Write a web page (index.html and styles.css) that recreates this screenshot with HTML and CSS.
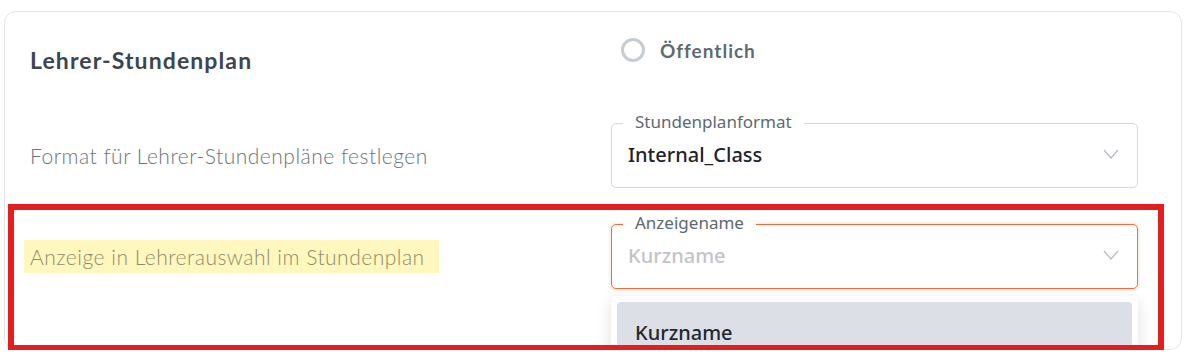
FILE: index.html
```html
<!DOCTYPE html>
<html lang="de">
<head>
    <meta charset="UTF-8">
    <meta name="viewport" content="width=device-width, initial-scale=1.0">
    <title>Lehrer-Stundenplan</title>
    <link rel="stylesheet" href="styles.css">
</head>
<body>
    <div class="page">
        <div class="card">
            <div class="row row-head">
                <h2 class="title">Lehrer-Stundenplan</h2>
                <label class="radio">
                    <span class="radio-dot"></span>
                    <span class="radio-text">Öffentlich</span>
                </label>
            </div>

            <div class="row row-format">
                <p class="desc">Format für Lehrer-Stundenpläne festlegen</p>
                <div class="select">
                    <span class="select-label">Stundenplanformat</span>
                    <span class="select-value">Internal_Class</span>
                    <svg class="chevron" width="16" height="10" viewBox="0 0 16 10">
                        <polyline points="1,1 8,9 15,1" fill="none" stroke="#b4bac1" stroke-width="1.2"/>
                    </svg>
                </div>
            </div>

            <!-- markierter bereich -->
            <div class="row row-display marked">
                <p class="desc"><span class="hl">Anzeige in Lehrerauswahl im Stundenplan</span></p>
                <div class="select select-open">
                    <span class="select-label">Anzeigename</span>
                    <span class="select-value placeholder">Kurzname</span>
                    <svg class="chevron" width="16" height="10" viewBox="0 0 16 10">
                        <polyline points="1,1 8,9 15,1" fill="none" stroke="#b4bac1" stroke-width="1.2"/>
                    </svg>
                    <ul class="dropdown">
                        <li class="option active">Kurzname</li>
                    </ul>
                </div>
            </div>
        </div>
    </div>
</body>
</html>
```

FILE: styles.css
```css
* {
    padding: 0;
    margin: 0;
    box-sizing: border-box;
}
html {
    background: #fff;
    overflow: hidden;
}
body {
    font-family: Lato, "Noto Sans", sans-serif;
}
.page {
    padding: 11px 6px 0 4px;
}
.card {
    border: 1px solid #e1e4e8;
    border-radius: 12px;
    background: #fff;
    padding-bottom: 60px;
}
.row {
    display: grid;
    grid-template-columns: 581px 527px;
    padding: 0 43px 0 25px;
}
.row-head {
    padding-top: 26px;
    align-items: start;
}
.title {
    margin-top: 9px;
    font-size: 23px;
    line-height: 26px;
    font-weight: 700;
    letter-spacing: 1.1px;
    color: #3b4650;
}
.radio {
    display: flex;
    align-items: center;
    gap: 15px;
    margin-left: 10px;
    height: 24px;
}
.radio-dot {
    width: 24px;
    height: 24px;
    border: 3px solid #c4ccd4;
    border-radius: 50%;
}
.radio-text {
    font-size: 19px;
    font-weight: 700;
    letter-spacing: 1px;
    color: #5f6a74;
}
.row-format {
    margin-top: 50px;
    align-items: center;
}
.desc {
    font-size: 21px;
    font-weight: 300;
    letter-spacing: 0.5px;
    color: #6b747d;
}
.row-display {
    margin-top: 22px;
    padding-top: 14px;
    align-items: center;
}
.hl {
    display: inline-block;
    margin-left: -6px;
    padding: 4px 14px 4px 6px;
    background: #fff7bd;
    color: #8c8d6c;
}
.select {
    position: relative;
    height: 65px;
    border: 1px solid #d3d8dd;
    border-radius: 5px;
    display: flex;
    align-items: center;
    justify-content: space-between;
    padding: 0 18px 3px 16px;
    font-family: "Noto Sans", sans-serif;
}
.select-label {
    position: absolute;
    top: -12px;
    left: 11px;
    padding: 0 12px;
    background: #fff;
    font-size: 17px;
    line-height: 20px;
    color: #5e6871;
}
.select-value {
    font-size: 20px;
    font-weight: 500;
    color: #1e2227;
}
.select-value.placeholder {
    color: #c2c4c7;
}
.select-open {
    border-color: #f56a3d;
    box-shadow: 0 0 0 2px rgba(245, 106, 61, 0.1);
}
.dropdown {
    position: absolute;
    top: 71px;
    left: -1px;
    right: -1px;
    list-style: none;
    background: #fff;
    padding: 6px;
    border-radius: 5px;
    box-shadow: 0 4px 16px rgba(0, 0, 0, 0.12);
    z-index: 1;
}
.option {
    padding: 20px 18px 30px;
    font-size: 20px;
    line-height: 22px;
    font-weight: 500;
    color: #24272b;
    border-radius: 4px;
}
.option.active {
    background: #dcdfe6;
}
.marked {
    position: relative;
}
.marked::after {
    content: "";
    position: absolute;
    top: -6px;
    left: 3px;
    right: 17px;
    bottom: -62px;
    border: 6px solid #e41e1e;
    pointer-events: none;
    z-index: 2;
}
```
